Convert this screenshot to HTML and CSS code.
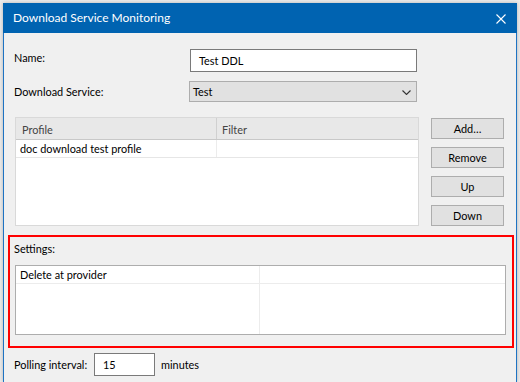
FILE: index.html
```html
<!DOCTYPE html>
<html>
<head>
<meta charset="utf-8">
<link rel="stylesheet" href="styles.css">
</head>
<body>
<div class="window">
  <div class="titlebar">
    <span class="title">Download Service Monitoring</span>
    <svg class="close" width="10" height="10" viewBox="0 0 10 10"><path d="M0.5 0.5 L9.5 9.5 M9.5 0.5 L0.5 9.5" stroke="#fff" stroke-width="1.1" fill="none"/></svg>
  </div>
  <div class="content">
    <div class="row name-row">
      <span class="label name-label">Name:</span>
      <div class="textbox wide">Test DDL</div>
    </div>
    <div class="row svc-row">
      <span class="label">Download Service:</span>
      <div class="combo">
        <span>Test</span>
        <svg width="9" height="5" viewBox="0 0 9 5"><path d="M0.5 0.5 L4.5 4.5 L8.5 0.5" stroke="#333" stroke-width="1.1" fill="none"/></svg>
      </div>
    </div>
    <div class="list-area">
      <div class="listview">
        <div class="lv-header">
          <div class="col c1">Profile</div>
          <div class="col c2">Filter</div>
        </div>
        <div class="lv-row">
          <div class="cell c1">doc download test profile</div>
          <div class="cell c2"></div>
        </div>
      </div>
      <div class="buttons">
        <div class="btn">Add…</div>
        <div class="btn">Remove</div>
        <div class="btn">Up</div>
        <div class="btn">Down</div>
      </div>
    </div>
    <div class="settings">
      <div class="settings-label">Settings:</div>
      <div class="settings-list">
        <div class="s-row">
          <div class="s-cell s1">Delete at provider</div>
          <div class="s-cell s2"></div>
        </div>
        <div class="s-fill">
          <div class="s1"></div>
          <div class="s2"></div>
        </div>
      </div>
    </div>
    <div class="polling">
      <span class="label plabel">Polling interval:</span>
      <div class="textbox small">15</div>
      <span class="label">minutes</span>
    </div>
  </div>
</div>
</body>
</html>
```

FILE: styles.css
```css
* { box-sizing: border-box; }
html, body { margin: 0; padding: 0; }
body {
  background: #ececec;
  font-family: Lato, "Noto Sans", sans-serif;
  font-size: 10.9px;
  color: #000;
  width: 520px;
  height: 382px;
  overflow: hidden;
}
.label { white-space: nowrap; }
.window {
  margin: 3px 0 0 3px;
  width: 514px;
  height: 379px;
  background: #f0f0f0;
  border-left: 1px solid #1e73c3;
  border-right: 1px solid #1e73c3;
  box-shadow: 0 0 4px rgba(0,0,0,0.25);
  display: flex;
  flex-direction: column;
}
.titlebar {
  height: 30px;
  margin: 0 -1px;
  background: #0063b1;
  color: #fff;
  display: flex;
  align-items: center;
  padding: 0 0 0 10px;
}
.title {
  font-size: 12px;
  flex: 1;
  padding-bottom: 1px;
}
.close {
  margin-right: 11px;
  margin-top: 1px;
}
.content {
  padding: 16px 0 0 10px;
  display: flex;
  flex-direction: column;
}
.row {
  display: grid;
  grid-template-columns: 176px auto;
  align-items: center;
}
.name-row { align-items: start; }
.name-label { padding-top: 2px; }
.svc-row { margin-top: 9px; }
.textbox {
  background: #fff;
  border: 1px solid #7a7a7a;
  height: 23px;
  display: flex;
  align-items: center;
  padding-left: 8px;
  padding-bottom: 1px;
}
.wide { width: 227px; }
.combo {
  margin-left: -1px;
  width: 228px;
  height: 21px;
  background: #e1e1e1;
  border: 1px solid #adadad;
  display: flex;
  align-items: center;
  justify-content: space-between;
  padding: 0 5px 0 3px;
}
.combo svg { margin-top: 1px; }
.list-area {
  margin-top: 15px;
  display: flex;
  gap: 12px;
}
.listview {
  margin-left: 1px;
  width: 404px;
  height: 109px;
  background: #fff;
  border: 1px solid #d9d9d9;
}
.lv-header {
  display: flex;
  height: 22px;
  background: #e8e8e8;
  border-bottom: 1px solid #c8c8c8;
  color: #444;
}
.col {
  display: flex;
  align-items: center;
  padding: 1px 0 0 6px;
}
.c1 { width: 201px; border-right: 1px solid #d0d0d0; }
.c2 { flex: 1; }
.lv-header .c2 { padding-left: 5px; }
.lv-row {
  display: flex;
  height: 18px;
  border-bottom: 1px solid #e6e6e6;
}
.cell {
  display: flex;
  align-items: center;
  padding-left: 4px;
}
.lv-row .c1 { border-right: 1px solid #ececec; }
.buttons {
  margin-top: 1px;
  display: flex;
  flex-direction: column;
  gap: 8px;
}
.btn {
  width: 73px;
  height: 21px;
  background: #e1e1e1;
  border: 1px solid #adadad;
  display: flex;
  align-items: center;
  justify-content: center;
  padding-bottom: 1px;
}
.settings {
  margin: 9px 0 0 -6px;
  width: 506px;
  height: 113px;
  border: 2px solid #ff0000;
  padding: 0 0 0 5px;
  display: flex;
  flex-direction: column;
}
.settings-label {
  height: 28px;
  padding-top: 5px;
  margin-left: -1px;
}
.settings-list {
  width: 491px;
  height: 70px;
  background: #fff;
  border: 1px solid #adadad;
  display: flex;
  flex-direction: column;
}
.s-row {
  display: flex;
  height: 18px;
  border-bottom: 1px solid #ececec;
}
.s-cell {
  display: flex;
  align-items: center;
  padding-left: 4px;
}
.s1 { width: 244px; border-right: 1px solid #ececec; }
.s2 { flex: 1; }
.s-fill { flex: 1; display: flex; }
.polling {
  margin-top: 5px;
  display: flex;
  align-items: center;
}
.plabel { width: 80px; flex-shrink: 0; }
.small {
  width: 61px;
  padding-left: 8px;
  margin-right: 6px;
}
```
